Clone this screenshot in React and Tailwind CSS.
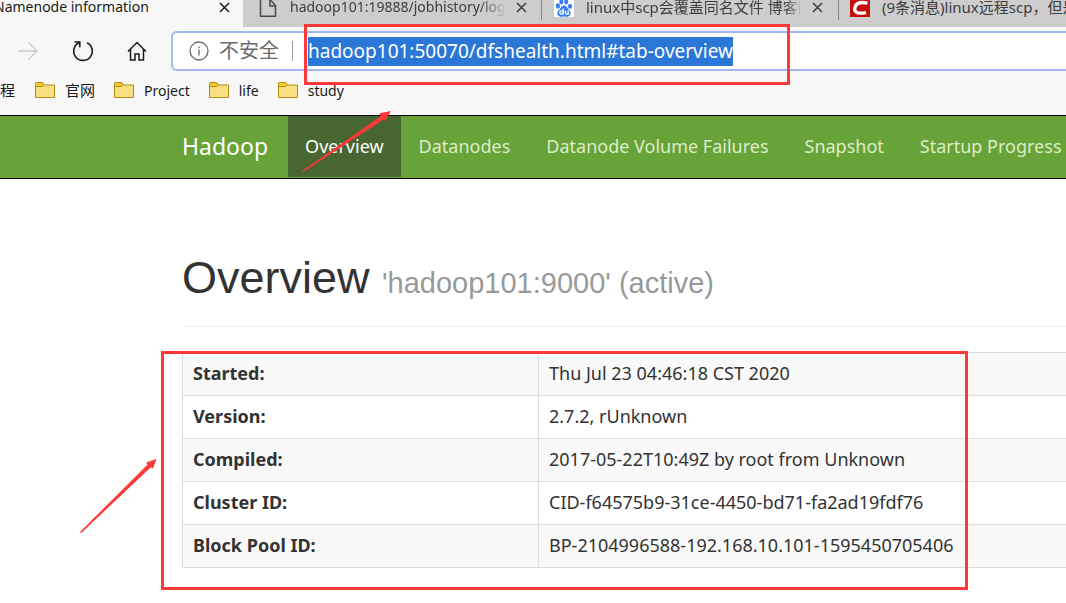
const closePath = 'M1 1l9 9M10 1l-9 9';

function CloseButton({ label, className }) {
  return (
    <button aria-label={label} className={`shrink-0 ${className}`}>
      <svg viewBox="0 0 11 11" className="h-[11px] w-[11px]" fill="none" stroke="currentColor" strokeWidth="1.5">
        <path d={closePath} />
      </svg>
    </button>
  );
}

function PageIcon() {
  return (
    <svg viewBox="0 0 18 18" className="h-[18px] w-[18px] shrink-0" fill="none" stroke="#4a4a4a" strokeWidth="1.5">
      <path d="M1.5 0v16.2h15V5.5L11.5 0M11 0v6h5.5" />
    </svg>
  );
}

function BaiduIcon() {
  return (
    <svg viewBox="0 0 20 20" className="-mt-[3px] h-5 w-5 shrink-0">
      <rect width="20" height="20" fill="#fff" />
      <g fill="#3b7ef0">
        <ellipse cx="3.9" cy="9" rx="2.1" ry="2.7" />
        <ellipse cx="7.3" cy="4.6" rx="2" ry="2.8" />
        <ellipse cx="12.2" cy="4.6" rx="2" ry="2.8" />
        <ellipse cx="16" cy="9.2" rx="2.1" ry="2.5" />
        <path d="M10 8.6c2.4 0 3 2.2 4.6 3.8 1.8 1.6 2.4 3 1.8 5-.8 2.4-3.6 2.4-6.4 2.2-2.8.2-5.6.2-6.4-2.2-.6-2 0-3.4 1.8-5C7 10.8 7.6 8.6 10 8.6z" />
      </g>
      <g fill="none" stroke="#fff" strokeWidth="1.3">
        <circle cx="7.5" cy="15.5" r="1.7" />
        <path d="M9.2 11.5v6M11.5 13.5v2.6q0 1 1 1h1.7v-3.6" />
      </g>
    </svg>
  );
}

function CsdnIcon() {
  return (
    <svg viewBox="0 0 20 20" className="-mt-[3px] h-5 w-5 shrink-0">
      <rect width="20" height="20" fill="#c40f0b" />
      <path d="M17.5 6.2Q8.5 4.2 5.8 8.5Q3.4 13 6 15Q8.5 17 16 15.6" fill="none" stroke="#fff" strokeWidth="3.4" />
    </svg>
  );
}

function FolderIcon() {
  return (
    <svg viewBox="0 0 20 16" className="h-4 w-5 shrink-0" stroke="#b58a12" strokeWidth="1">
      <path d="M.5 15.5V1.5q0-1 1-1h6l2 2.5h10v12.5z" fill="#f9df80" />
      <path d="M.5 4.5v-3q0-1 1-1h6l1.5 2-1.5 2z" fill="#f8cb2e" />
    </svg>
  );
}

function TabStrip() {
  return (
    <div className="flex h-[27px] items-start overflow-hidden bg-[#cdcdcd] text-[15px] leading-[14px] text-[#3c3c3c]">
      <div className="flex h-full w-[243px] shrink-0 items-start bg-[#f7f7f7] text-[14px] text-[#1a1a1a]">
        <span className="-ml-1.5 flex-1 whitespace-nowrap">Namenode information</span>
        <CloseButton label="Close Namenode information" className="mt-0.5 mr-[13px]" />
      </div>
      <div className="flex h-full w-[298px] shrink-0 items-start pl-4 text-[14px]">
        <PageIcon />
        <span className="ml-[13px] h-5 w-[216px] overflow-hidden whitespace-nowrap [mask-image:linear-gradient(to_right,black_88%,transparent)]">hadoop101:19888/jobhistory/log</span>
        <CloseButton label="Close job history" className="mt-0.5 ml-[10px]" />
      </div>
      <div className="flex h-5 w-[297px] shrink-0 items-start border-l border-[#858585] pl-3">
        <BaiduIcon />
        <span className="ml-3 h-5 w-[216px] overflow-hidden whitespace-nowrap [mask-image:linear-gradient(to_right,black_92%,transparent)]">linux中scp会覆盖同名文件 博客园</span>
        <CloseButton label="Close search result" className="mt-0.5 ml-[10px]" />
      </div>
      <div className="flex h-5 min-w-0 flex-1 items-start border-l border-[#858585] pl-[11px]">
        <CsdnIcon />
        <span className="ml-3 whitespace-nowrap">(9条消息)linux远程scp，但是</span>
      </div>
    </div>
  );
}

function Toolbar() {
  return (
    <div className="flex h-10 items-center">
      <button aria-label="Forward" className="ml-[18px] text-[#c9c9c9]">
        <svg viewBox="0 0 20 20" className="h-5 w-5" fill="none" stroke="currentColor" strokeWidth="1.4">
          <path d="M0 10h19M10.5 1.5L19 10l-8.5 8.5" />
        </svg>
      </button>
      <button aria-label="Refresh" className="ml-[34px] text-[#1a1a1a]">
        <svg viewBox="0 0 22 22" className="h-[22px] w-[22px]" fill="none" stroke="currentColor" strokeWidth="1.6">
          <path d="M15 2.7A9.3 9.3 0 1 1 7 2.7M2.5 2h5.3v5.3" />
        </svg>
      </button>
      <button aria-label="Home" className="ml-[33px] text-[#1a1a1a]">
        <svg viewBox="0 0 20 20" className="h-5 w-5" fill="none" stroke="currentColor" strokeWidth="1.5">
          <path d="M1 10.5L10 1.5l9 9M3.5 8.5V19H8v-6h4v6h4.5V8.5" />
        </svg>
      </button>
      <div className="ml-6 flex h-full min-w-0 flex-1 items-center rounded-l-md border-2 border-r-0 border-[#a3b8ee] bg-white pl-4">
        <svg viewBox="0 0 20 20" className="h-5 w-5 shrink-0" fill="none" stroke="#6b6b6b" strokeWidth="1.3">
          <circle cx="10" cy="10" r="9" />
          <path d="M10 8.5v6M10 5.5v1.5" />
        </svg>
        <span className="ml-[10px] shrink-0 text-xl text-[#6b6b6b]">不安全</span>
        <span className="ml-[13px] h-5 w-px shrink-0 bg-[#9a9a9a]" />
        <div className="ml-[15px] flex min-w-0 flex-1 items-center">
          <a href="#tab-overview" className="h-[29px] bg-[#2b77d8] text-[19px] leading-[29px] whitespace-nowrap text-white">hadoop101:50070/dfshealth.html#tab-overview</a>
        </div>
      </div>
    </div>
  );
}

function Bookmark({ name, className = '' }) {
  return (
    <a href="#bookmark" className={`flex items-center gap-[10px] ${className}`}>
      <FolderIcon />
      <span>{name}</span>
    </a>
  );
}

function Bookmarks() {
  return (
    <div className="flex h-[38px] items-center gap-[19px] overflow-hidden text-[14px] whitespace-nowrap text-[#1a1a1a]">
      <span className="w-4 shrink-0 text-[15px]">程</span>
      <Bookmark name="官网" className="text-[15px]" />
      <Bookmark name="Project" />
      <Bookmark name="life" />
      <Bookmark name="study" />
    </div>
  );
}

const links = ['Datanodes', 'Datanode Volume Failures', 'Snapshot', 'Startup Progress'];

function Navbar() {
  return (
    <nav className="flex h-16 items-start overflow-hidden border-y border-black bg-[#68a339] pl-[182px] text-[18px] leading-[61px] whitespace-nowrap text-[#dcedc8]">
      <a href="#brand" className="pr-5 text-[23px] text-white">Hadoop</a>
      <a href="#tab-overview" className="bg-[#486632] px-[17px] text-white">Overview</a>
      {links.map((name) => (
        <a key={name} href="#tab" className="px-[18px]">{name}</a>
      ))}
    </nav>
  );
}

const rows = [
  ['Started:', 'Thu Jul 23 04:46:18 CST 2020'],
  ['Version:', '2.7.2, rUnknown'],
  ['Compiled:', '2017-05-22T10:49Z by root from Unknown'],
  ['Cluster ID:', 'CID-f64575b9-31ce-4450-bd71-fa2ad19fdf76'],
  ['Block Pool ID:', 'BP-2104996588-192.168.10.101-1595450705406'],
];

function Annotations() {
  return (
    <div className="pointer-events-none absolute top-0 left-0" aria-hidden="true">
      <div className="absolute top-6 left-[304px] h-[61px] w-[486px] border-3 border-[#fc3838]" />
      <div className="absolute top-[351px] left-[161px] h-[239px] w-[807px] border-3 border-[#fc3838]" />
      <svg viewBox="0 0 400 560" className="absolute top-0 left-0 h-[560px] w-[400px]" fill="#fc3838">
        <path d="M302 171L380.8 116.2L379.5 113.2L391 111L385 121L383.2 119.8L303 172z" />
        <path d="M80 532L147.6 464.4L146 462.5L156.5 459L153 468.5L150.8 467.3L81.2 533z" />
      </svg>
    </div>
  );
}

export default function App() {
  return (
    <div className="relative min-h-screen overflow-hidden bg-white font-['Noto_Sans','Noto_Sans_CJK_SC',sans-serif]">
      <header className="bg-[#f7f7f7]">
        <TabStrip />
        <div className="pt-1 pb-1.5">
          <Toolbar />
          <Bookmarks />
        </div>
      </header>
      <Navbar />
      <main className="ml-[182px] text-[#333]">
        <h1 className="border-b border-[#eee] pt-[74px] pb-[18px] font-['Liberation_Sans',sans-serif] text-[45px] leading-[49px]">
          Overview <small className="text-[29px] text-[#999]">'hadoop101:9000' (active)</small>
        </h1>
        <table className="mt-[25px] w-full border-collapse text-left text-[18px] leading-[26px]">
          <tbody>
            {rows.map(([name, value]) => (
              <tr key={name} className="border-y border-[#ddd] odd:bg-[#f9f9f9]">
                <th scope="row" className="w-[356px] border-x border-[#ddd] px-[10px] pt-[7px] pb-[9px] font-bold">{name}</th>
                <td className="px-[10px] pt-[7px] pb-[9px]">{value}</td>
              </tr>
            ))}
          </tbody>
        </table>
      </main>
      <Annotations />
    </div>
  );
}
